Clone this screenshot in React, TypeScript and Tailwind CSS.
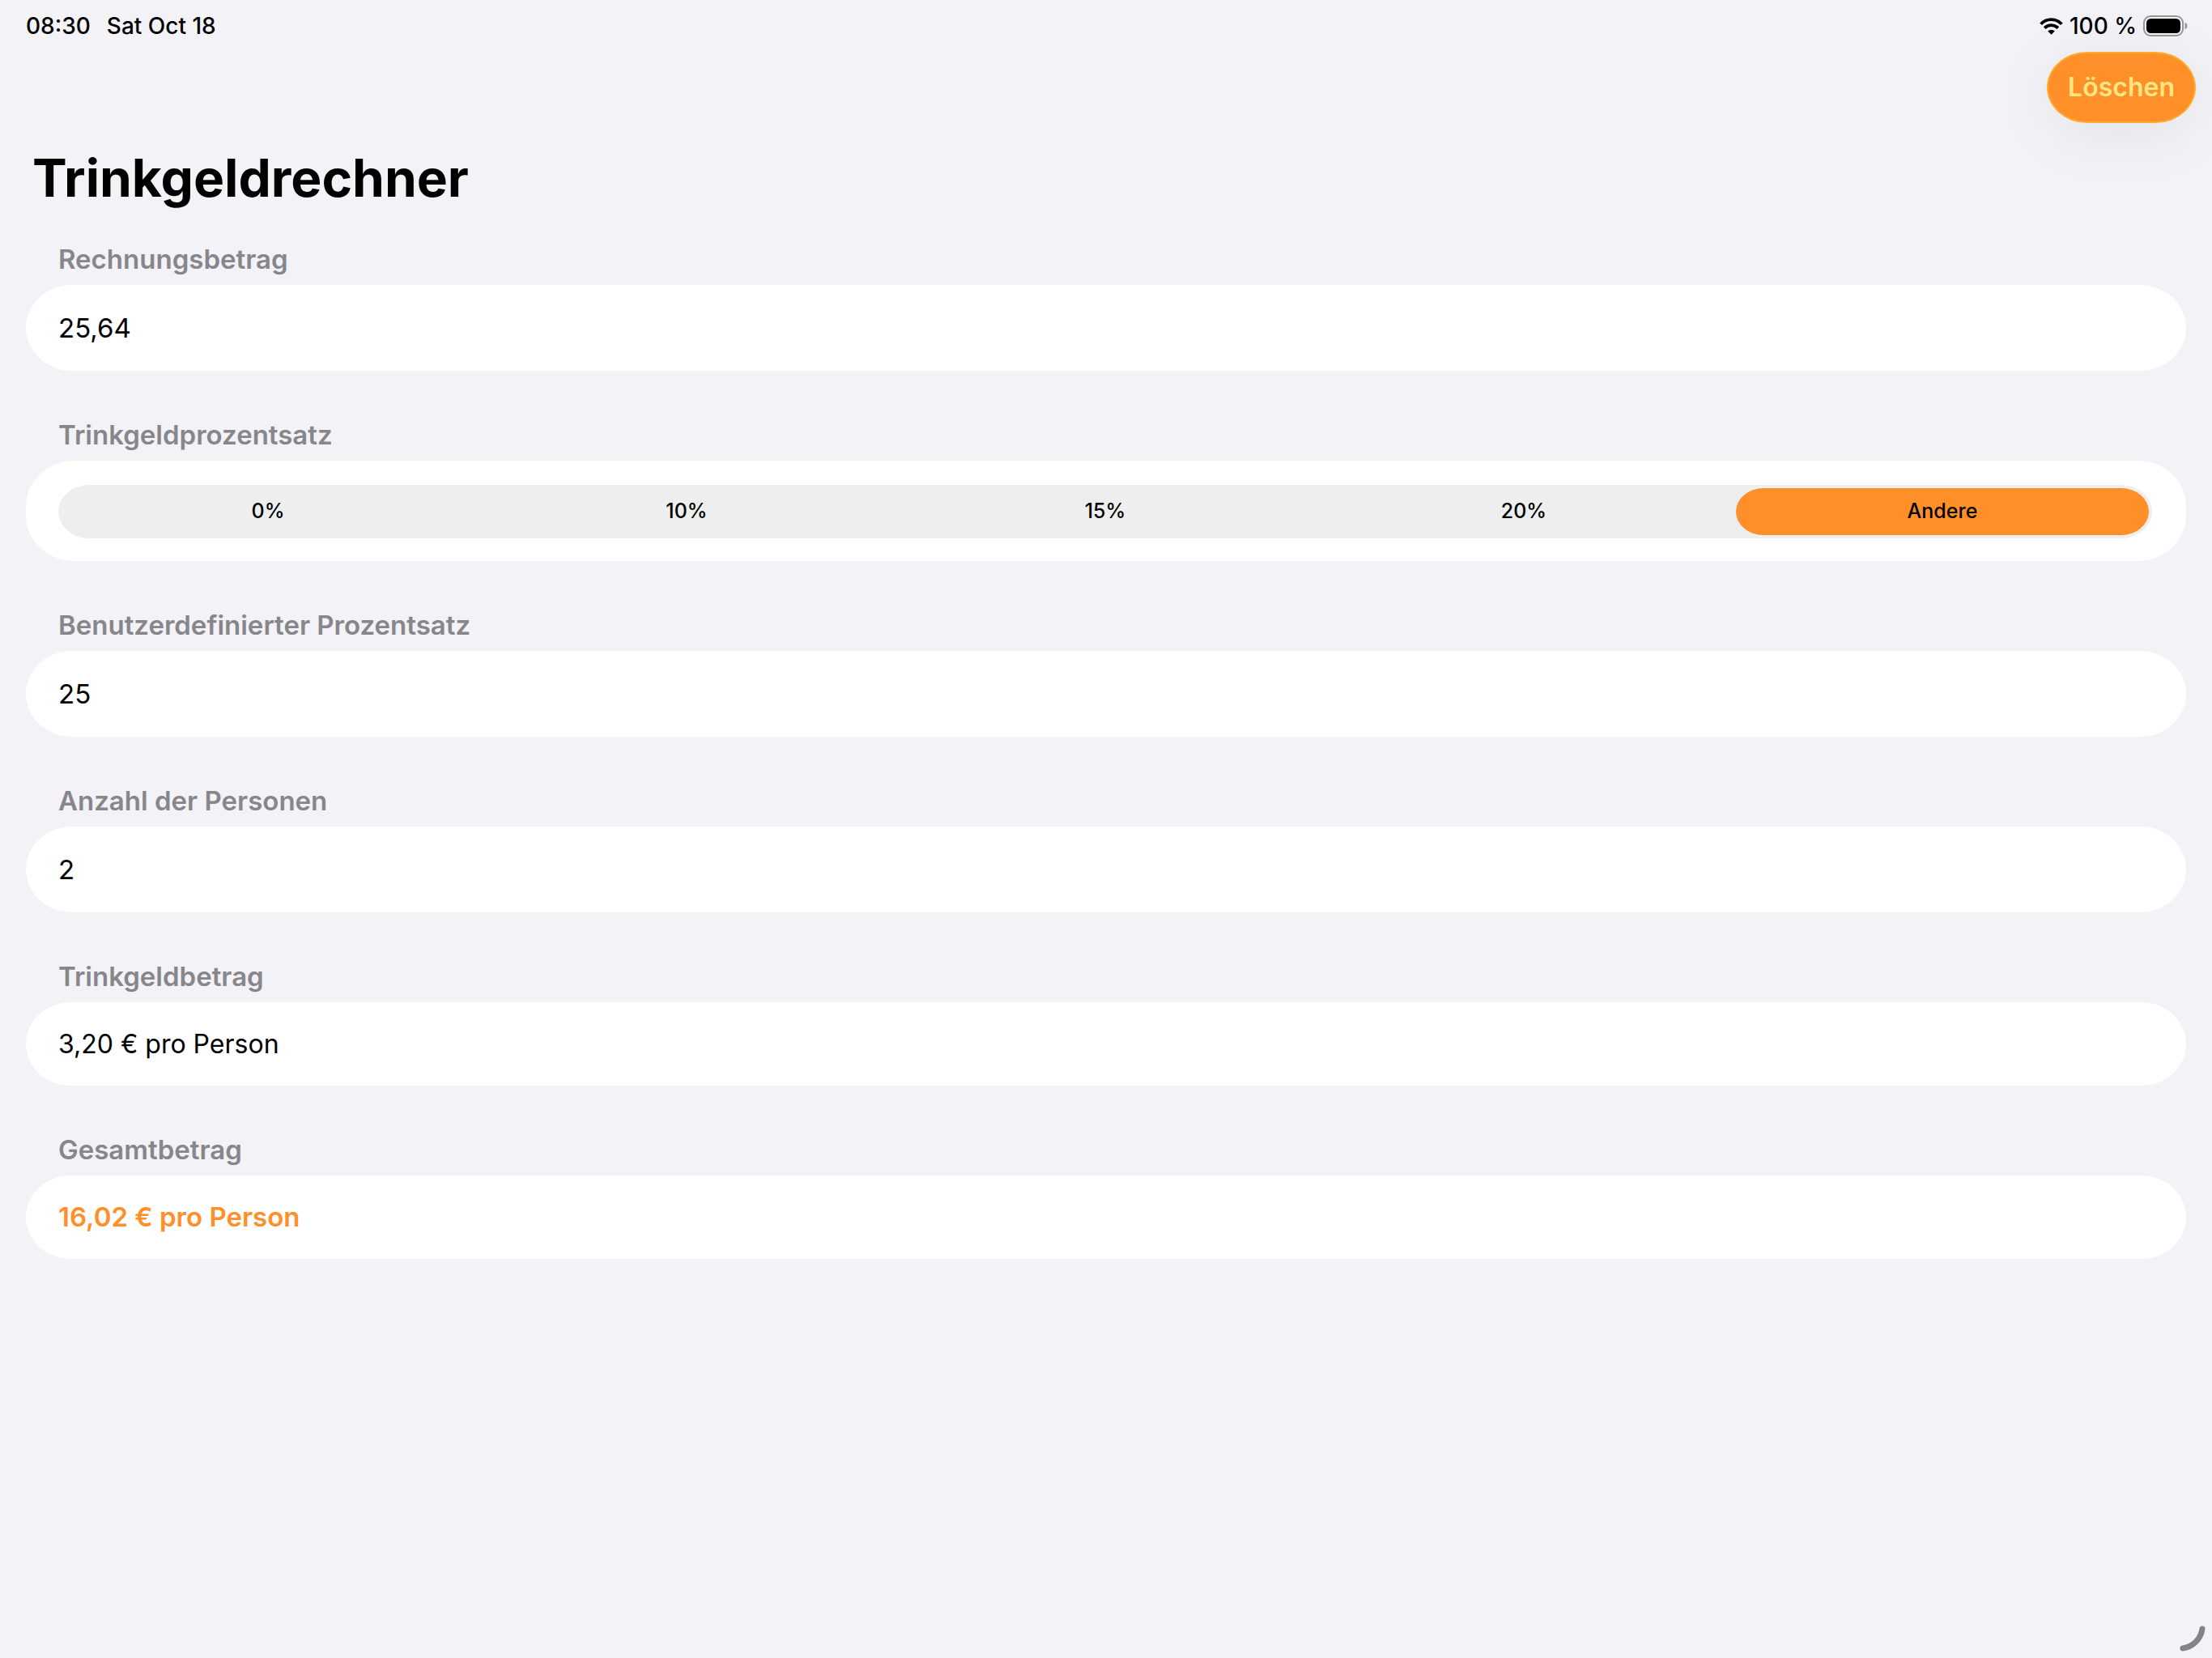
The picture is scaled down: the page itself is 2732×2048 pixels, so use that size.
import { useState, type ReactNode } from "react";

const PRESETS = ["0", "10", "15", "20"];

function parse(value: string): number {
  const n = Number(value.replace(",", "."));
  return Number.isFinite(n) ? n : 0;
}

/** Formats an amount as German currency, rounding half cents to even. */
function formatEuro(amount: number): string {
  const cents = Math.round(amount * 1e6) / 1e4;
  const floor = Math.floor(cents);
  const rest = cents - floor;
  const rounded = rest === 0.5 ? floor + (floor % 2) : Math.round(cents);
  return `${(rounded / 100).toFixed(2).replace(".", ",")} €`;
}

function WifiIcon() {
  return (
    <svg className="h-[21px] w-[29px]" viewBox="0 0 29 21" fill="none" aria-hidden="true">
      <path d="M1.6 7.8A17.6 17.6 0 0 1 27.4 7.8" stroke="#000" strokeWidth="3.8" />
      <path d="M6.2 12.6A11.6 11.6 0 0 1 22.8 12.6" stroke="#000" strokeWidth="3.8" />
      <path d="M14.5 20.8L10.2 16.6A6.2 6.2 0 0 1 18.8 16.6Z" fill="#000" />
    </svg>
  );
}

function BatteryIcon() {
  return (
    <svg className="h-[26px] w-[55px]" viewBox="0 0 55 26" fill="none" aria-hidden="true">
      <rect x="1" y="1" width="48" height="24" rx="8" stroke="#97979a" strokeWidth="2" />
      <rect x="4" y="4" width="42" height="18" rx="5.5" fill="#000" />
      <path d="M51.5 8.8C53.4 9.6 54.6 11.2 54.6 13C54.6 14.8 53.4 16.4 51.5 17.2Z" fill="#97979a" />
    </svg>
  );
}

const LABEL = "block pl-10 text-[33px] leading-[48px] font-semibold text-[#86868b]";
const CARD = "mt-2 w-full rounded-[60px/56px] bg-white";

function Field({ id, label, value, onChange }: { id: string; label: string; value: string; onChange: (v: string) => void }) {
  return (
    <section>
      <label htmlFor={id} className={LABEL}>{label}</label>
      <div className={CARD}>
        <input
          id={id}
          inputMode="decimal"
          value={value}
          onChange={(e) => onChange(e.target.value)}
          className="block h-[106px] w-full bg-transparent px-10 text-[33px] outline-none"
        />
      </div>
    </section>
  );
}

function Result({ label, children, accent }: { label: string; children: ReactNode; accent?: boolean }) {
  return (
    <section>
      <h2 className={LABEL}>{label}</h2>
      <div className={CARD}>
        <output className={`flex h-[103px] items-center px-10 ${accent ? "text-[33px] font-semibold text-[#ff8f28]" : "text-[32px]"}`}>
          {children}
        </output>
      </div>
    </section>
  );
}

export default function App() {
  const [bill, setBill] = useState("25,64");
  const [choice, setChoice] = useState("other");
  const [custom, setCustom] = useState("25");
  const [people, setPeople] = useState("2");

  const percent = choice === "other" ? parse(custom) : Number(choice);
  const heads = Math.max(1, parse(people));
  const tip = (parse(bill) * percent) / 100;

  const clear = () => {
    setBill("");
    setCustom("");
    setPeople("");
  };

  const options = [...PRESETS.map((p) => ({ value: p, text: `${p}%` })), { value: "other", text: "Andere" }];

  return (
    <div className="relative min-h-screen bg-[#f2f2f7] pb-16 font-['Inter',sans-serif] text-black">
      <div className="flex h-16 items-center justify-between pr-[30px] pl-8 text-[28px] font-medium">
        <div className="flex gap-5">
          <span>08:30</span>
          <span>Sat Oct 18</span>
        </div>
        <div className="flex items-center gap-2">
          <WifiIcon />
          <span>100 %</span>
          <BatteryIcon />
        </div>
      </div>

      <header>
        <div className="flex justify-end pr-5">
          <button
            type="button"
            onClick={clear}
            className="h-[88px] rounded-[50px/44px] border-2 border-[#ffab2e] bg-[#ff8f28] px-6 text-[32px] font-semibold text-[#ffe680] shadow-[0_12px_80px_rgba(0,0,0,0.07)]"
          >
            Löschen
          </button>
        </div>
        <h1 className="mt-7 pl-10 text-[64px] leading-[80px] font-bold">Trinkgeldrechner</h1>
      </header>

      <main className="mt-9 flex flex-col gap-[55px] px-8">
        <Field id="bill" label="Rechnungsbetrag" value={bill} onChange={setBill} />

        <fieldset>
          <legend className={LABEL}>Trinkgeldprozentsatz</legend>
          <div className={`${CARD} pt-[30px] pr-[42px] pb-7 pl-10`}>
            <div className="flex h-[66px] gap-[7px] rounded-[38px/33px] bg-[#eeeeee] p-1">
              {options.map((o) => (
                <label
                  key={o.value}
                  className="flex flex-1 cursor-pointer items-center justify-center rounded-[34px/29px] text-[25px] font-medium has-checked:bg-[#ff8f28]"
                >
                  <input
                    type="radio"
                    name="percent"
                    value={o.value}
                    checked={choice === o.value}
                    onChange={() => setChoice(o.value)}
                    className="sr-only"
                  />
                  {o.text}
                </label>
              ))}
            </div>
          </div>
        </fieldset>

        {choice === "other" && (
          <Field id="custom" label="Benutzerdefinierter Prozentsatz" value={custom} onChange={setCustom} />
        )}
        <Field id="people" label="Anzahl der Personen" value={people} onChange={setPeople} />
        <Result label="Trinkgeldbetrag">{formatEuro(tip / heads)} pro Person</Result>
        <Result label="Gesamtbetrag" accent>{formatEuro((parse(bill) + tip) / heads)} pro Person</Result>
      </main>

      <svg className="absolute right-2 bottom-2 h-8 w-8" viewBox="0 0 32 32" fill="none" aria-hidden="true">
        <path d="M28 4A28 28 0 0 1 4 28" stroke="#848484" strokeWidth="7" strokeLinecap="round" />
      </svg>
    </div>
  );
}
